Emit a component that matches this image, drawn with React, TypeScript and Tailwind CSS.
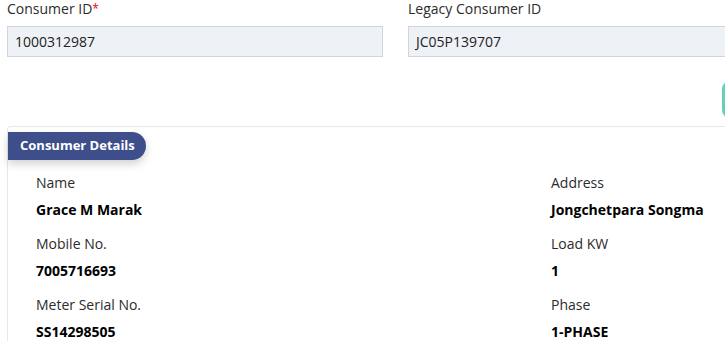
const fields = [
  { left: ["Name", "Grace M Marak"], right: ["Address", "Jongchetpara Songma"] },
  { left: ["Mobile No.", "7005716693"], right: ["Load KW", "1"] },
  { left: ["Meter Serial No.", "SS14298505"], right: ["Phase", "1-PHASE"] },
];

const Field = ({ label, value }: { label: string; value: string }) => (
  <div className="flex flex-col">
    <span className="text-[14px] leading-[20px] text-[#2b2b2b]">{label}</span>
    <span className="mt-[7px] text-[14px] leading-[20px] font-bold text-black">{value}</span>
  </div>
);

const App = () => {
  return (
    <div
      className="w-[725px] h-[341px] overflow-hidden bg-white"
      style={{ fontFamily: '"Open Sans", "Liberation Sans", sans-serif' }}
    >
      <div className="w-[1100px] pl-[7px]">
        <div className="grid grid-cols-[376px_376px] gap-x-[25px]">
          <div className="flex flex-col">
            <label className="text-[14px] leading-[17px] text-[#2b2b2b]">
              Consumer ID<span className="text-red-600 text-[12px] align-top">*</span>
            </label>
            <div className="mt-[9px] h-[31px] flex items-center px-[7px] bg-[#eef1f5] border border-[#cfd5dc] text-[14px] text-[#222]">
              1000312987
            </div>
          </div>
          <div className="flex flex-col">
            <label className="text-[14px] leading-[17px] text-[#2b2b2b]">Legacy Consumer ID</label>
            <div className="mt-[9px] h-[31px] flex items-center px-[7px] bg-[#eef1f5] border border-[#cfd5dc] text-[14px] text-[#222]">
              JC05P139707
            </div>
          </div>
        </div>

        <div className="flex pl-[715px] mt-[24px]">
          <div className="w-[120px] h-[37px] rounded-[8px] border-[3px] border-[#63d1b9] bg-white"></div>
        </div>

        <div className="mt-[8px] border-t border-l border-[#e8e8ec] rounded-tl-[4px]">
          <div className="mt-[5px] inline-flex items-center h-[28px] pl-[12px] pr-[11px] rounded-r-full bg-[#3d4e8b] text-white text-[13px] font-bold shadow-[0_4px_8px_rgba(0,0,0,0.18)]">
            Consumer Details
          </div>
          <div className="pl-[28px] pt-[13px] flex flex-col gap-y-[14px]">
            {fields.map((row) => (
              <div key={row.left[0]} className="grid grid-cols-[515px_1fr]">
                <Field label={row.left[0]} value={row.left[1]} />
                <Field label={row.right[0]} value={row.right[1]} />
              </div>
            ))}
          </div>
        </div>
      </div>
    </div>
  );
};

export default App;
